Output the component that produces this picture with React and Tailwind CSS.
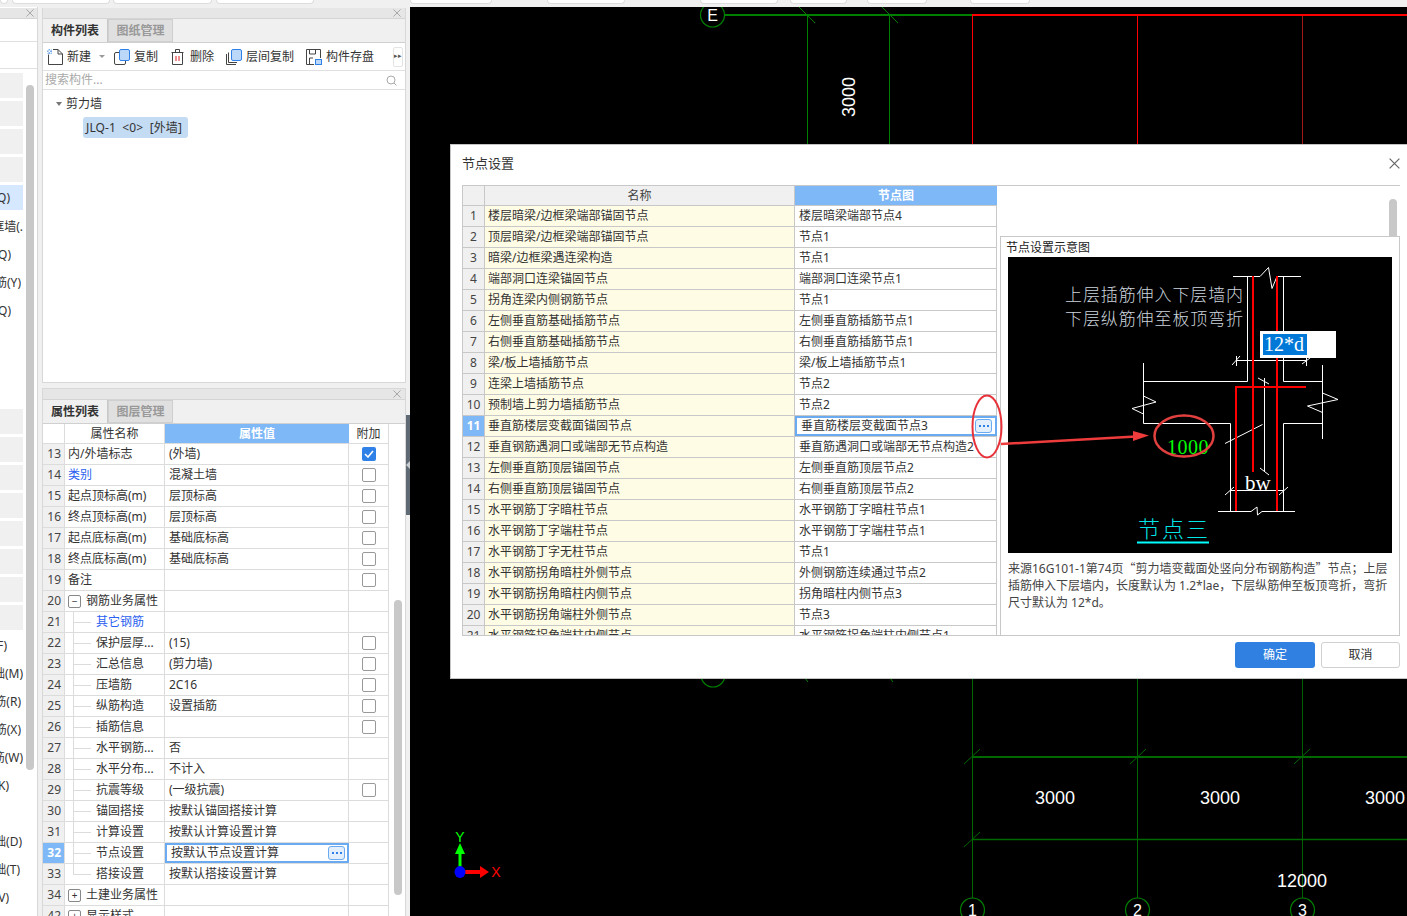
const FONT = '"Noto Sans","Noto Sans CJK SC",sans-serif';

const topTabsLeft = [
  "w-[8px]", "w-[98px] ml-[4px]", "w-[99px] ml-[3px]", "w-[98px] ml-[4px]",
];
const topTabsRight = [
  "w-[82px] ml-[96px]", "w-[78px] ml-[55px]", "w-[78px] ml-[75px]", "w-[57px] ml-[12px]", "w-[60px] ml-[20px]", "w-[60px] ml-[43px]",
];

const leftRowsTop = [
  { t: "Q)" , w: "w-[11px]" },
  { t: "框墙(.", w: "w-[24px]" },
  { t: "Q)", w: "w-[11px]" },
  { t: "筋(Y)", w: "w-[21px]" },
  { t: "Q)", w: "w-[11px]" },
];
const leftRowsBottom = [
  { t: "F)", w: "w-[7px]" },
  { t: "础(M)", w: "w-[24px]" },
  { t: "筋(R)", w: "w-[21px]" },
  { t: "筋(X)", w: "w-[21px]" },
  { t: "筋(W)", w: "w-[24px]" },
  { t: "K)", w: "w-[9px]" },
  { t: "", w: "w-[9px]" },
  { t: "础(D)", w: "w-[22px]" },
  { t: "础(T)", w: "w-[20px]" },
  { t: "V)", w: "w-[9px]" },
];

const propRows = [
  { n: 13, name: "内/外墙标志", value: "(外墙)", check: "on" },
  { n: 14, name: "类别", value: "混凝土墙", check: "off", blue: true },
  { n: 15, name: "起点顶标高(m)", value: "层顶标高", check: "off" },
  { n: 16, name: "终点顶标高(m)", value: "层顶标高", check: "off" },
  { n: 17, name: "起点底标高(m)", value: "基础底标高", check: "off" },
  { n: 18, name: "终点底标高(m)", value: "基础底标高", check: "off" },
  { n: 19, name: "备注", value: "", check: "off" },
  { n: 20, name: "钢筋业务属性", value: "", group: "minus" },
  { n: 21, name: "其它钢筋", value: "", child: true, blue: true },
  { n: 22, name: "保护层厚...", value: "(15)", child: true, check: "off" },
  { n: 23, name: "汇总信息", value: "(剪力墙)", child: true, check: "off" },
  { n: 24, name: "压墙筋", value: "2C16", child: true, check: "off" },
  { n: 25, name: "纵筋构造", value: "设置插筋", child: true, check: "off" },
  { n: 26, name: "插筋信息", value: "", child: true, check: "off" },
  { n: 27, name: "水平钢筋...", value: "否", child: true },
  { n: 28, name: "水平分布...", value: "不计入", child: true },
  { n: 29, name: "抗震等级", value: "(一级抗震)", child: true, check: "off" },
  { n: 30, name: "锚固搭接", value: "按默认锚固搭接计算", child: true },
  { n: 31, name: "计算设置", value: "按默认计算设置计算", child: true },
  { n: 32, name: "节点设置", value: "按默认节点设置计算", child: true, active: true },
  { n: 33, name: "搭接设置", value: "按默认搭接设置计算", child: true, last: true },
  { n: 34, name: "土建业务属性", value: "", group: "plus" },
  { n: 42, name: "显示样式", value: "", group: "plus" },
];

const nodeRows = [
  ["楼层暗梁/边框梁端部锚固节点", "楼层暗梁端部节点4"],
  ["顶层暗梁/边框梁端部锚固节点", "节点1"],
  ["暗梁/边框梁遇连梁构造", "节点1"],
  ["端部洞口连梁锚固节点", "端部洞口连梁节点1"],
  ["拐角连梁内侧钢筋节点", "节点1"],
  ["左侧垂直筋基础插筋节点", "左侧垂直筋插筋节点1"],
  ["右侧垂直筋基础插筋节点", "右侧垂直筋插筋节点1"],
  ["梁/板上墙插筋节点", "梁/板上墙插筋节点1"],
  ["连梁上墙插筋节点", "节点2"],
  ["预制墙上剪力墙插筋节点", "节点2"],
  ["垂直筋楼层变截面锚固节点", "垂直筋楼层变截面节点3"],
  ["垂直钢筋遇洞口或端部无节点构造", "垂直筋遇洞口或端部无节点构造2"],
  ["左侧垂直筋顶层锚固节点", "左侧垂直筋顶层节点2"],
  ["右侧垂直筋顶层锚固节点", "右侧垂直筋顶层节点2"],
  ["水平钢筋丁字暗柱节点", "水平钢筋丁字暗柱节点1"],
  ["水平钢筋丁字端柱节点", "水平钢筋丁字端柱节点1"],
  ["水平钢筋丁字无柱节点", "节点1"],
  ["水平钢筋拐角暗柱外侧节点", "外侧钢筋连续通过节点2"],
  ["水平钢筋拐角暗柱内侧节点", "拐角暗柱内侧节点3"],
  ["水平钢筋拐角端柱外侧节点", "节点3"],
  ["水平钢筋拐角端柱内侧节点", "水平钢筋拐角端柱内侧节点1"],
];

const EllipsisButton = () => (
  <span className="flex h-[14px] w-[17px] items-center justify-center gap-[2px] rounded-[3px] border border-[#6aaaf0] bg-[#e3effc]">
    <i className="h-[2px] w-[2px] bg-[#2f80e7]" />
    <i className="h-[2px] w-[2px] bg-[#2f80e7]" />
    <i className="h-[2px] w-[2px] bg-[#2f80e7]" />
  </span>
);

const NewIcon = () => (
  <svg width="16" height="16" viewBox="0 0 16 16" fill="none">
    <path d="M1.5 5.5V15.5H15.5V5L11 .5H6" stroke="#444" />
    <path d="M11 .5V5H15.5" stroke="#444" />
    <rect x="0" y="0" width="5" height="5" fill="#7fb0ee" />
    <path d="M0 0h1.5v1.5H0zM3 0h1.5v1.5H3zM1.5 1.5H3V3H1.5zM0 3h1.5v1.5H0zM3 3h1.5v1.5H3z" fill="#fff" />
  </svg>
);
const CopyIcon = () => (
  <svg width="16" height="16" viewBox="0 0 16 16" fill="none">
    <rect x=".5" y="3.5" width="11" height="12" rx="1.5" stroke="#444" fill="#fff" />
    <rect x="5.5" y=".5" width="10" height="11" rx="1.5" stroke="#2f80e7" fill="#bcd8f8" />
  </svg>
);
const TrashIcon = () => (
  <svg width="13" height="16" viewBox="0 0 13 16" fill="none">
    <path d="M.5 3.5H12.5M4.5 3V.5H8.5V3M1.5 3.5V15.5H11.5V3.5" stroke="#444" />
    <path d="M5 7V12M8 7V12" stroke="#e02020" />
  </svg>
);
const FloorCopyIcon = () => (
  <svg width="16" height="16" viewBox="0 0 16 16" fill="none">
    <path d="M.5 5V15.5H10M2.5 3.5V13.5H11" stroke="#444" />
    <rect x="5.5" y=".5" width="10" height="11" rx="1.5" stroke="#2f80e7" fill="#bcd8f8" />
  </svg>
);
const SaveIcon = () => (
  <svg width="16" height="16" viewBox="0 0 16 16" fill="none">
    <path d="M8 15.5H.5V.5H14.5V9" stroke="#444" />
    <path d="M3.5 1V5H9.5V1M3.5 15V9H7" stroke="#444" />
    <rect x="9.5" y="10.5" width="6" height="5" stroke="#2f80e7" fill="#bcd8f8" />
  </svg>
);

const toolbar = [
  { icon: <NewIcon />, label: "新建", cls: "ml-[4px] gap-[4px]" },
  { icon: <CopyIcon />, label: "复制", cls: "ml-[9px] gap-[4px]" },
  { icon: <TrashIcon />, label: "删除", cls: "ml-[13px] gap-[6px]" },
  { icon: <FloorCopyIcon />, label: "层间复制", cls: "ml-[12px] gap-[4px]" },
  { icon: <SaveIcon />, label: "构件存盘", cls: "ml-[12px] gap-[4px]" },
];

const CloseX = ({ size = 9, color = "#a0a0a0" }) => (
  <svg width={size} height={size} viewBox="0 0 9 9" fill="none">
    <path d="M.5.5L8.5 8.5M8.5.5L.5 8.5" stroke={color} />
  </svg>
);

const Tabs = ({ first, second }) => (
  <div className="flex h-[24px] border-b border-[#d0d0d0] bg-[#f0f0f0] text-[12px]">
    <div className="flex w-[65px] items-center justify-center border-r border-[#c8c8c8] font-semibold text-[#333]">{first}</div>
    <div className="flex w-[65px] items-center justify-center border border-[#cfcfcf] bg-[#e0e0e0] font-semibold text-[#999]">{second}</div>
  </div>
);

const PanelHeader = () => (
  <div className="flex h-[11px] items-center justify-end border-b border-[#d4d4d4] bg-[#e6e6e6] pr-[4px]">
    <CloseX size={8} />
  </div>
);

const PropRow = ({ row }) => (
  <div className="flex h-[21px] border-b border-[#dcdcdc] text-[12px] text-[#333]">
    <div className={`flex w-[22px] shrink-0 items-center justify-end border-r border-[#dcdcdc] pr-[3px] ${row.active ? "bg-[#7fb8f7] font-bold text-white" : "bg-[#f0f0f0] text-[#444]"}`}>
      {row.n}
    </div>
    <div className={`relative flex w-[100px] shrink-0 items-center whitespace-nowrap border-r border-[#dcdcdc] ${row.child ? "pl-[31px]" : "pl-[3px]"} ${row.blue ? "text-[#2b5ff0]" : ""}`}>
      {row.child && (
        <>
          <span className={`absolute left-[8px] top-0 w-px bg-[#dcdcdc] ${row.last ? "h-[11px]" : "h-[21px]"}`} />
          <span className="absolute left-[9px] top-[10px] h-px w-[17px] bg-[#dcdcdc]" />
        </>
      )}
      {row.group && (
        <span className="mr-[5px] flex h-[13px] w-[13px] items-center justify-center rounded-[2px] border border-[#888] text-[10px] leading-none">
          {row.group === "minus" ? "−" : "+"}
        </span>
      )}
      {row.name}
    </div>
    {row.active ? (
      <div className="flex w-[184px] shrink-0 items-center justify-between border-2 border-[#6aaaf0] pl-[4px] pr-[2px]">
        {row.value}
        <EllipsisButton />
      </div>
    ) : (
      <div className="flex w-[184px] shrink-0 items-center border-r border-[#dcdcdc] pl-[4px]">{row.value}</div>
    )}
    <div className="flex w-[40px] shrink-0 items-center justify-center border-r border-[#dcdcdc]">
      {row.check === "on" && (
        <span className="flex h-[14px] w-[14px] items-center justify-center rounded-[2px] bg-[#2f80e7]">
          <svg width="10" height="8" viewBox="0 0 10 8" fill="none"><path d="M1 4L4 7L9 1" stroke="#fff" strokeWidth="1.6" /></svg>
        </span>
      )}
      {row.check === "off" && <span className="h-[14px] w-[14px] rounded-[2px] border border-[#999] bg-white" />}
    </div>
  </div>
);

const NodeRow = ({ row, index }) => {
  const active = index === 10;
  return (
    <div className="flex h-[21px] shrink-0 border-b border-[#c8c8c8] text-[12px] text-[#333]">
      <div className={`flex w-[22px] shrink-0 items-center justify-center border-r border-[#c8c8c8] ${active ? "bg-[#7fb8f7] font-bold text-white" : "bg-[#f0f0f0] text-[#444]"}`}>
        {index + 1}
      </div>
      <div className="flex w-[310px] shrink-0 items-center border-r border-[#c8c8c8] bg-[#fffce6] pl-[3px] whitespace-nowrap">{row[0]}</div>
      {active ? (
        <div className="flex w-[202px] shrink-0 items-center justify-between border-2 border-[#6aaaf0] bg-white pl-[4px] pr-[3px]">
          {row[1]}
          <EllipsisButton />
        </div>
      ) : (
        <div className="flex w-[202px] shrink-0 items-center overflow-hidden whitespace-nowrap border-r border-[#c8c8c8] bg-white pl-[4px]">{row[1]}</div>
      )}
    </div>
  );
};

const AxisBubble = ({ x, y, label, r = 12 }) => (
  <g>
    <circle cx={x} cy={y} r={r} stroke="#008000" strokeWidth="1.2" fill="#000" />
    <text x={x} y={y + 6} textAnchor="middle" fill="#fff" fontSize="16" fontFamily="Liberation Sans">{label}</text>
  </g>
);

const CadCanvas = () => (
  <svg className="block h-full w-full" viewBox="410 7 997 909" fill="none">
    <path d="M807.5 15V150M889.5 15V150" stroke="#008000" />
    <path d="M972.5 15V150M1137.5 15V150" stroke="#ff0000" />
    <path d="M1302.5 15V150" stroke="#a01818" />
    <path d="M725 15H972" stroke="#008000" strokeWidth="2" />
    <path d="M972 15H1407" stroke="#ff0000" strokeWidth="2" />
    <path d="M799 7L815 23M882 7L898 23" stroke="#008000" />
    <AxisBubble x={712.5} y={15} label="E" />
    <text transform="translate(855 117) rotate(-90)" fill="#fff" fontSize="18" fontFamily="Liberation Sans">3000</text>

    <AxisBubble x={713} y={675} label="" />
    <path d="M805 678L808 682M890 678L893 682" stroke="#008000" />
    <path d="M972.5 670V900M1137.5 670V900" stroke="#006800" />
    <path d="M1302.5 670V900" stroke="#006000" />
    <path d="M972 757H1407" stroke="#006800" strokeWidth="2" />
    <path d="M972 839.5H1407" stroke="#006800" strokeWidth="1.4" />
    <path d="M964 764L980 749M1130 764L1146 749M1294 764L1310 749M964 847L980 832" stroke="#006800" />
    <text x="1035" y="804" fill="#fff" fontSize="18" fontFamily="Liberation Sans">3000</text>
    <text x="1200" y="804" fill="#fff" fontSize="18" fontFamily="Liberation Sans">3000</text>
    <text x="1365" y="804" fill="#fff" fontSize="18" fontFamily="Liberation Sans">3000</text>
    <text x="1277" y="887" fill="#fff" fontSize="18" fontFamily="Liberation Sans">12000</text>
    <AxisBubble x={972.5} y={910} label="1" />
    <AxisBubble x={1137.5} y={910} label="2" />
    <AxisBubble x={1302.5} y={910} label="3" />

    <path d="M460 853V868" stroke="#00ff00" strokeWidth="3" />
    <path d="M460 843L465 854H455Z" fill="#00ff00" />
    <text x="460" y="842" textAnchor="middle" fill="#00ff00" fontSize="14" fontFamily="Liberation Sans">Y</text>
    <path d="M464 872H481" stroke="#ff0000" strokeWidth="4" />
    <path d="M489 872L480 866V878Z" fill="#ff0000" />
    <ellipse cx="460" cy="872" rx="5.5" ry="6" fill="#0000ff" />
    <text x="496" y="877" textAnchor="middle" fill="#ff0000" fontSize="14" fontFamily="Liberation Sans">X</text>
  </svg>
);

const NodeDiagram = () => (
  <svg className="block h-[296px] w-[384px] bg-black" viewBox="1008 257 384 296" fill="none">
    <g stroke="#fff">
      <path d="M1233 276.5H1260L1268.5 267.5L1272 288.5L1277 276.5H1301" />
      <path d="M1247.5 276V381.5H1143.5M1283.5 276V381.5H1322.5" />
      <path d="M1143.5 363V423.5H1230.5V511M1322.5 365V439M1322.5 423.5H1283.5V511" />
      <path d="M1143.5 396L1156 402L1132 408.5L1143.5 414" />
      <path d="M1322.5 393L1338 399.5L1307.5 406L1322.5 412.5" />
      <path d="M1218 511.5H1251L1257 507L1257.5 515L1262 511.5H1295" />
      <path d="M1236 360.5H1306.5M1232 365L1240 356M1302 364L1310 358M1236.5 356V366M1306.5 356V366" />
      <path d="M1264.5 378V472M1258 378L1269 384M1260 468L1269 475" />
      <path d="M1225 443.5L1262.5 424.5" />
      <path d="M1230 490.5H1283.5M1225 495L1234 487M1279 495L1288 487" />
    </g>
    <g stroke="#ff0000" strokeWidth="2">
      <path d="M1253 276V472M1277 276V511" />
      <path d="M1306 387H1236V511" />
    </g>
    <rect x="1260" y="331" width="76" height="27" fill="#fff" />
    <rect x="1263" y="334" width="44" height="21" fill="#0078d7" />
    <text x="1264" y="351" fill="#fff" fontSize="20" fontFamily="Liberation Serif">12*d</text>
    <text x="1167" y="454" fill="#00ff00" fontSize="20" fontFamily="Liberation Serif" letterSpacing=".5">1000</text>
    <text x="1245" y="490" fill="#fff" fontSize="21" fontFamily="Liberation Serif">bw</text>
    <text x="1065" y="301" fill="#cdd5dd" fontSize="17" letterSpacing=".9" fontFamily="Noto Sans CJK SC" fontWeight="300">上层插筋伸入下层墙内</text>
    <text x="1065" y="325" fill="#cdd5dd" fontSize="17" letterSpacing=".9" fontFamily="Noto Sans CJK SC" fontWeight="300">下层纵筋伸至板顶弯折</text>
    <text x="1138" y="537" fill="#00e5e5" fontSize="22" letterSpacing="2" fontFamily="Noto Sans CJK SC" fontWeight="300">节点三</text>
    <path d="M1137 542.5H1209" stroke="#00ffff" strokeWidth="2" />
  </svg>
);

const Annotations = () => (
  <svg className="pointer-events-none absolute left-0 top-0 h-[534px] w-[957px]" viewBox="450 144 957 534" fill="none">
    <ellipse cx="986" cy="425.5" rx="14.5" ry="31" stroke="#e8323a" strokeWidth="2" />
    <ellipse cx="1183" cy="435" rx="29.5" ry="20.5" stroke="#e2403f" strokeWidth="2.5" />
    <path d="M1000 443L1135 435.5" stroke="#ee3b3b" strokeWidth="2.5" />
    <path d="M1148 434.5L1132 430V440Z" fill="#ee3b3b" />
  </svg>
);

export default function App() {
  return (
    <div className="relative flex h-[916px] w-[1407px] flex-col overflow-hidden bg-[#f0f0f0]" style={{ fontFamily: FONT }}>
      <div className="flex h-[7px] shrink-0 items-start">
        {topTabsLeft.map((cls, i) => (
          <div key={i} className={`h-[4px] rounded-b-[4px] border border-t-0 border-[#dddddd] bg-white ${cls}`} />
        ))}
        {topTabsRight.map((cls, i) => (
          <div key={i} className={`h-[4px] rounded-b-[4px] border border-t-0 border-[#dddddd] bg-white ${cls}`} />
        ))}
      </div>

      <div className="flex min-h-0 flex-1">
        {/* cut off left panel */}
        <div className="flex w-[38px] shrink-0 flex-col overflow-hidden border-r border-[#d8d8d8] bg-white">
          <div className="mt-px flex h-[11px] shrink-0 items-center justify-end border-b border-[#d4d4d4] bg-[#e6e6e6] pr-[3px]">
            <CloseX size={8} />
          </div>
          <div className="h-[23px] shrink-0 border-b border-[#e0e0e0]" />
          <div className="h-[27px] shrink-0 border-b border-[#e0e0e0]" />
          <div className="flex min-h-0 flex-1 pt-[4px]">
            <div className="flex w-[23px] shrink-0 flex-col text-[12px] text-[#333]">
              {[0, 1, 2, 3].map((i) => (
                <div key={i} className="mb-[3px] h-[25px] shrink-0 bg-[#f0f0f0]" />
              ))}
              <div className="flex h-[28px] shrink-0 flex-col">
                <div className="flex h-[25px] items-center justify-end overflow-hidden whitespace-nowrap bg-[#d5e8ff] pr-[13px]">Q)</div>
              </div>
              {leftRowsTop.slice(1).map((r, i) => (
                <div key={i} className="flex h-[28px] shrink-0 items-center overflow-hidden">
                  <div className={`flex justify-end overflow-hidden whitespace-nowrap ${r.w}`}>{r.t}</div>
                </div>
              ))}
              <div className="h-[84px] shrink-0" />
              {[0, 1, 2, 3, 4, 5, 6, 7].map((i) => (
                <div key={i} className="mb-[3px] h-[25px] shrink-0 bg-[#f0f0f0]" />
              ))}
              <div className="-mt-px flex flex-col">
                {leftRowsBottom.map((r, i) => (
                  <div key={i} className="flex h-[28px] shrink-0 items-center overflow-hidden">
                    <div className={`flex justify-end overflow-hidden whitespace-nowrap ${r.w}`}>{r.t}</div>
                  </div>
                ))}
              </div>
            </div>
            <div className="ml-[3px] mt-[12px] h-[685px] w-[8px] shrink-0 rounded-[4px] bg-[#c8c8c8]" />
          </div>
        </div>

        {/* component list + property list */}
        <div className="ml-[4px] flex w-[364px] shrink-0 flex-col pt-px">
          <div className="flex h-[375px] shrink-0 flex-col border border-t-0 border-[#d8d8d8] bg-white">
            <PanelHeader />
            <Tabs first="构件列表" second="图纸管理" />
            <div className="flex h-[28px] items-center border-b border-[#e0e0e0] text-[12px] text-[#333]">
              {toolbar.map((item, i) => (
                <div key={item.label} className={`flex items-center ${item.cls}`}>
                  {item.icon}
                  <span className="whitespace-nowrap">{item.label}</span>
                  {i === 0 && <span className="ml-[4px] h-0 w-0 border-x-[3px] border-t-[3px] border-x-transparent border-t-[#999]" />}
                </div>
              ))}
              <div className="ml-auto mr-[2px] flex h-[20px] w-[10px] items-center justify-center rounded-[2px] border border-[#e4e4e4] text-[7px] text-[#555]">▸▸</div>
            </div>
            <div className="flex h-[19px] items-center justify-between border-b border-[#e0e0e0] pl-[2px] pr-[8px] text-[12px] text-[#aaa]">
              搜索构件...
              <svg width="11" height="11" viewBox="0 0 11 11" fill="none">
                <circle cx="5" cy="5" r="4" stroke="#aaa" />
                <path d="M8 8L10.5 10.5" stroke="#aaa" />
              </svg>
            </div>
            <div className="flex items-center pl-[13px] pt-[5px] text-[12px] text-[#333]">
              <span className="mr-[4px] h-0 w-0 border-x-[3px] border-t-[4px] border-x-transparent border-t-[#777]" />
              剪力墙
            </div>
            <div className="ml-[40px] mt-[4px] flex h-[21px] w-[105px] items-center whitespace-pre rounded-[3px] bg-[#c3dbf3] pl-[3px] text-[12px] tracking-[0.1px] text-[#333]">
              JLQ-1  &lt;0&gt;  [外墙]
            </div>
          </div>

          <div className="mt-[5px] flex min-h-0 flex-1 flex-col overflow-hidden border-x border-[#d8d8d8] bg-white">
            <div className="h-px shrink-0 bg-[#d8d8d8]" />
            <PanelHeader />
            <Tabs first="属性列表" second="图层管理" />
            <div className="flex min-h-0 flex-1">
              <div className="w-[346px] shrink-0">
                <div className="flex h-[20px] border-b border-[#dcdcdc] text-[12px] text-[#333]">
                  <div className="w-[22px] shrink-0 border-r border-[#dcdcdc]" />
                  <div className="flex w-[100px] shrink-0 items-center justify-center border-r border-[#dcdcdc]">属性名称</div>
                  <div className="flex w-[184px] shrink-0 items-center justify-center bg-[#7fb8f7] font-semibold text-white">属性值</div>
                  <div className="flex w-[40px] shrink-0 items-center justify-center border-r border-[#dcdcdc]">附加</div>
                </div>
                {propRows.map((row) => (
                  <PropRow key={row.n} row={row} />
                ))}
              </div>
              <div className="ml-[5px] mt-[176px] h-[295px] w-[8px] shrink-0 rounded-[4px] bg-[#c8c8c8]" />
            </div>
          </div>
        </div>

        {/* splitter */}
        <div className="flex w-[4px] shrink-0 flex-col pt-[408px]">
          <div className="flex h-[100px] items-center justify-center bg-[#5f6a75]">
            <span className="h-0 w-0 border-y-[4px] border-r-[4px] border-y-transparent border-r-[#c8ccd0]" />
          </div>
        </div>

        <div className="min-w-0 flex-1 bg-black">
          <CadCanvas />
        </div>
      </div>

      {/* dialog */}
      <div className="absolute left-[450px] top-[144px] flex h-[535px] w-[957px] flex-col border-b border-l border-t border-[#c4c4c4] bg-white">
        <div className="flex h-[40px] shrink-0 items-center justify-between pb-[2px] pl-[11px] pr-[7px] text-[13px] text-[#333]">
          节点设置
          <span className="-mt-[2px]"><CloseX size={11} color="#666" /></span>
        </div>
        <div className="ml-[11px] flex h-[451px] w-[938px] shrink-0 overflow-hidden border-y border-[#c8c8c8]">
          <div className="flex w-[535px] shrink-0 flex-col border-l border-[#c8c8c8]">
            <div className="flex h-[20px] shrink-0 border-b border-[#c8c8c8] text-[12px] text-[#444]">
              <div className="w-[22px] shrink-0 border-r border-[#c8c8c8] bg-[#f0f0f0]" />
              <div className="flex w-[310px] shrink-0 items-center justify-center border-r border-[#c8c8c8] bg-[#f0f0f0]">名称</div>
              <div className="flex w-[202px] shrink-0 items-center justify-center bg-[#7fb8f7] font-semibold text-white">节点图</div>
            </div>
            {nodeRows.map((row, i) => (
              <NodeRow key={i} row={row} index={i} />
            ))}
          </div>
          <div className="ml-[3px] flex w-[400px] shrink-0 flex-col">
            <div className="flex h-[50px] shrink-0 items-end justify-end pr-[3px]">
              <div className="h-[37px] w-[8px] rounded-t-[4px] bg-[#c8c8c8]" />
            </div>
            <div className="flex min-h-0 flex-1 flex-col border-x border-t border-[#c8c8c8] px-[7px]">
              <div className="-ml-[2px] flex h-[20px] shrink-0 items-center pt-[2px] text-[12px] text-[#222]">节点设置示意图</div>
              <NodeDiagram />
              <div className="mt-[6px] whitespace-nowrap text-[12px] leading-[17px] text-[#444]">
                <p>来源16G101-1第74页<span className="font-['Noto_Sans_CJK_SC']">“</span>剪力墙变截面处竖向分布钢筋构造<span className="font-['Noto_Sans_CJK_SC']">”</span>节点；上层</p>
                <p>插筋伸入下层墙内，长度默认为 1.2*lae，下层纵筋伸至板顶弯折，弯折</p>
                <p>尺寸默认为 12*d。</p>
              </div>
            </div>
          </div>
        </div>
        <div className="flex flex-1 items-start justify-end pr-[7px] pt-[6px] text-[12px]">
          <div className="flex h-[26px] w-[80px] items-center justify-center rounded-[3px] bg-[#2f80e0] text-white">确定</div>
          <div className="ml-[6px] flex h-[26px] w-[79px] items-center justify-center rounded-[3px] border border-[#d0d0d0] bg-white text-[#333]">取消</div>
        </div>
        <Annotations />
      </div>
    </div>
  );
}
